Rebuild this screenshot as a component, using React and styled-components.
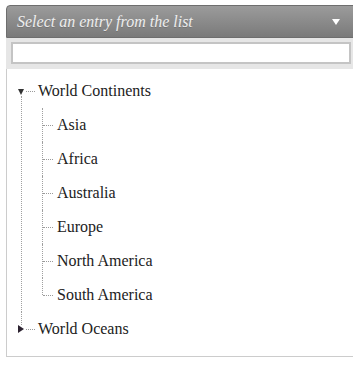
import React from 'react'
import styled, { createGlobalStyle } from 'styled-components'

const GlobalStyle = createGlobalStyle`
  html, body {
    margin: 0;
    padding: 0;
    background: #ffffff;
    overflow: hidden;
  }
  body {
    font-family: 'Liberation Serif', 'Times New Roman', serif;
  }
`

const Page = styled.div`
  padding: 5px 0 0 6px;
  width: 360px;
`

const Header = styled.div`
  height: 31px;
  display: flex;
  align-items: center;
  justify-content: space-between;
  padding: 0 10px 0 10px;
  border: 1px solid #6e6e6e;
  border-top-left-radius: 4px;
  background: linear-gradient(#9b9b9b, #7a7a7a);
  color: #eeeeee;
  font-family: 'Liberation Serif', 'Times New Roman', serif;
  font-style: italic;
  font-size: 16px;
  text-shadow: 0 1px 0 rgba(0, 0, 0, 0.15);
`

const Caret = styled.span`
  width: 0;
  height: 0;
  margin-right: 15px;
  border-left: 4px solid transparent;
  border-right: 4px solid transparent;
  border-top: 6px solid #ffffff;
`

const FilterBar = styled.div`
  background: #e6e6e6;
  padding: 4px 0 5px 5px;
`

const FilterInput = styled.input`
  display: block;
  box-sizing: border-box;
  width: 340px;
  height: 22px;
  margin: 0;
  border: 2px solid #c4c4c4;
  background: #ffffff;
  outline: none;
`

const Panel = styled.div`
  border-left: 1px solid #cccccc;
  border-bottom: 1px solid #cccccc;
  padding: 5px 0 10px;
`

const Tree = styled.ul`
  list-style: none;
  margin: 0;
  padding: 0;
`

const TopItem = styled.li`
  position: relative;

  &::before {
    content: '';
    position: absolute;
    left: 14px;
    top: ${p => (p.$last ? '0' : '22px')};
    height: ${p => (p.$last ? '13px' : 'auto')};
    bottom: ${p => (p.$last ? 'auto' : '0')};
    border-left: 1px dotted #a0a0a0;
  }
`

const Row = styled.div`
  height: 34px;
  display: flex;
  align-items: center;
  padding-left: ${p => p.$indent}px;
  font-family: 'Liberation Serif', 'Times New Roman', serif;
  font-size: 16px;
  color: #222222;
`

const Toggle = styled.span`
  width: 0;
  height: 0;
  ${p =>
    p.$open
      ? `
    border-left: 3.5px solid transparent;
    border-right: 3.5px solid transparent;
    border-top: 6px solid #333333;
    margin-top: 1px;
  `
      : `
    border-top: 4px solid transparent;
    border-bottom: 4px solid transparent;
    border-left: 6px solid #2c2230;
    margin-right: 1px;
  `}
`

const Dash = styled.span`
  width: ${p => p.$w}px;
  margin-left: ${p => p.$ml}px;
  margin-right: ${p => p.$mr}px;
  border-top: 1px dotted #9a9a9a;
  margin-top: 1px;
`

const Children = styled.ul`
  list-style: none;
  margin: 0 0 0 35px;
  padding: 0;
`

const ChildItem = styled.li`
  position: relative;

  &::before {
    content: '';
    position: absolute;
    left: 0;
    top: 0;
    height: ${p => (p.$last ? '17px' : '100%')};
    border-left: 1px dotted #a0a0a0;
  }
`

const continents = ['Asia', 'Africa', 'Australia', 'Europe', 'North America', 'South America']

export default function App() {
  return (
    <>
      <GlobalStyle />
      <Page>
        <Header>
          <span>Select an entry from the list</span>
          <Caret />
        </Header>
        <FilterBar>
          <FilterInput type="text" />
        </FilterBar>
        <Panel>
          <Tree>
            <TopItem>
              <Row $indent={11}>
                <Toggle $open />
                <Dash $w={9} $ml={2} $mr={3} />
                World Continents
              </Row>
              <Children>
                {continents.map((name, i) => (
                  <ChildItem key={name} $last={i === continents.length - 1}>
                    <Row $indent={1}>
                      <Dash $w={10} $ml={0} $mr={4} />
                      {name}
                    </Row>
                  </ChildItem>
                ))}
              </Children>
            </TopItem>
            <TopItem $last>
              <Row $indent={11}>
                <Toggle />
                <Dash $w={9} $ml={1} $mr={3} />
                World Oceans
              </Row>
            </TopItem>
          </Tree>
        </Panel>
      </Page>
    </>
  )
}
